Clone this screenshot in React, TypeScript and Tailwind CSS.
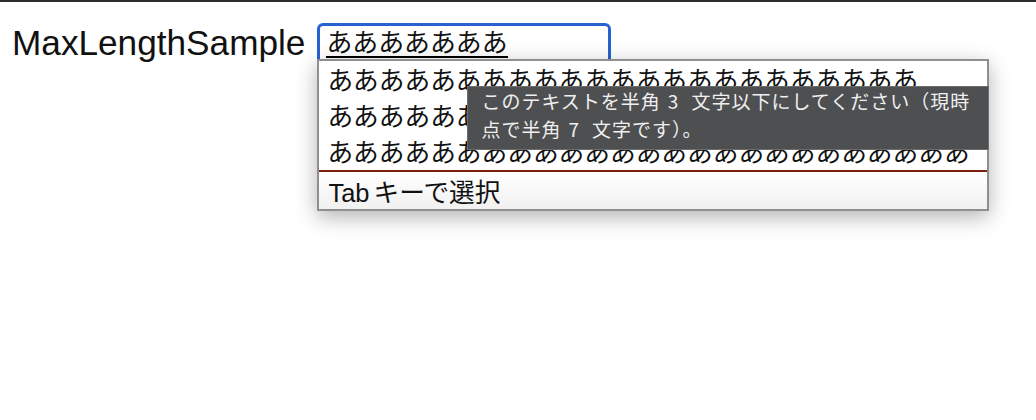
import React from "react";

const rows = [
  "あ".repeat(23),
  "あ".repeat(24),
  "あ".repeat(25),
];

function CandidateWindow() {
  return (
    <div className="absolute left-0 top-[36px] z-10 w-[672px] h-[152px] border-2 border-[#8f8f8f] bg-white shadow-[0_6px_20px_rgba(0,0,0,0.3)] font-['Noto_Sans_CJK_JP',sans-serif] text-[#111]">
      <div className="flex flex-col">
        {rows.map((r, i) => (
          <div
            key={i}
            className="h-[36px] pl-[8px] text-[25.7px] leading-[36px] whitespace-nowrap overflow-hidden"
          >
            {r}
          </div>
        ))}
      </div>
      <div className="mt-[1px] h-[2px] bg-[#7a1f10]" />
      <div className="h-[37px] pl-[9px] text-[25.7px] leading-[37px] whitespace-nowrap overflow-hidden bg-gradient-to-b from-white to-[#f1f1f1]">
        <span className="font-['Liberation_Sans',Arial,sans-serif] text-[25.5px]">Tab</span>
        <span className="ml-[4px]">キーで選択</span>
      </div>

      {/* validation bubble */}
      <div className="absolute left-[148px] top-[25px] z-20 w-[522px] h-[64px] border border-[#6d6d6d] bg-[#4e4f51] pl-[13px] pt-0 text-[19px] leading-[27.5px] tracking-[1px] text-[#f0f0f0]">
        <div className="whitespace-nowrap">
          このテキストを半角<span className="ml-[7px] mr-[12px]">3</span>文字以下にしてください（現時
        </div>
        <div className="whitespace-nowrap">
          点で半角<span className="ml-[7px] mr-[12px]">7</span>文字です）。
        </div>
      </div>
    </div>
  );
}

export default function App() {
  return (
    <div className="min-h-screen bg-white border-t-2 border-[#2e2e2e]">
      <div className="flex items-start pl-3 pt-[21px]">
        <label className="font-['Liberation_Sans',Arial,sans-serif] text-[35.2px] leading-[40px] text-[#111]">
          MaxLengthSample
        </label>
        <div className="relative ml-[12px]">
          <div className="w-[294px] h-[44px] rounded-[6px] border-[3px] border-[#2762cf] bg-white pl-[6px] font-['Noto_Sans_CJK_JP',sans-serif] text-[#111]">
            <span className="inline-block border-b-2 border-black text-[25.9px] leading-[30px]">
              あああああああ
            </span>
          </div>
          <CandidateWindow />
        </div>
      </div>
    </div>
  );
}
